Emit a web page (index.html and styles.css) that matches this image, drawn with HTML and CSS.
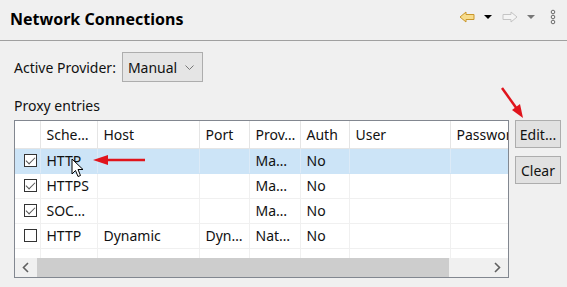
FILE: index.html
```html
<!DOCTYPE html>
<html lang="en">
<head>
    <meta charset="UTF-8">
    <link rel="stylesheet" href="styles.css">
</head>
<body>
<div class="page">
    <header class="titlebar">
        <div class="title">Network Connections</div>
        <div class="nav">
            <svg class="nav-arrow" width="16" height="12" viewBox="0 0 16 12">
                <path d="M1 6 L7 1 L7 3.5 L15 3.5 L15 8.5 L7 8.5 L7 11 Z" fill="#f7dc8c" stroke="#c9972c" stroke-width="1" stroke-linejoin="round"/>
            </svg>
            <span class="drop"></span>
            <svg class="nav-arrow" width="16" height="12" viewBox="0 0 16 12">
                <path d="M15 6 L9 1 L9 3.5 L1 3.5 L1 8.5 L9 8.5 L9 11 Z" fill="#f4f4f4" stroke="#c4c4c4" stroke-width="1" stroke-linejoin="round"/>
            </svg>
            <span class="drop gray"></span>
            <svg class="dots" width="6" height="16" viewBox="0 0 6 16">
                <circle cx="3" cy="3" r="1.8" fill="none" stroke="#6a6a6a" stroke-width="1"/>
                <circle cx="3" cy="8" r="1.8" fill="none" stroke="#6a6a6a" stroke-width="1"/>
                <circle cx="3" cy="13" r="1.8" fill="none" stroke="#6a6a6a" stroke-width="1"/>
            </svg>
        </div>
    </header>

    <main class="content">
        <div class="provider">
            <span>Active Provider:</span>
            <div class="combo">
                <span>Manual</span>
                <svg width="9" height="5" viewBox="0 0 9 5">
                    <path d="M0.5 0.5 L4.5 4.5 L8.5 0.5" fill="none" stroke="#777" stroke-width="1"/>
                </svg>
            </div>
        </div>

        <div class="section-label">Proxy entries</div>

        <div class="entries">
            <div class="grid">
                <div class="grid-body">
                    <table class="proxy-table">
                        <colgroup>
                            <col style="width:25px">
                            <col style="width:57px">
                            <col style="width:102px">
                            <col style="width:50px">
                            <col style="width:51px">
                            <col style="width:49px">
                            <col style="width:101px">
                            <col style="width:90px">
                        </colgroup>
                        <thead>
                            <tr>
                                <th></th>
                                <th>Sche…</th>
                                <th>Host</th>
                                <th>Port</th>
                                <th>Prov…</th>
                                <th>Auth</th>
                                <th>User</th>
                                <th>Passwor</th>
                            </tr>
                        </thead>
                        <tbody>
                            <tr class="selected">
                                <td><span class="check on"></span></td>
                                <td>HTTP</td><td></td><td></td><td>Ma…</td><td>No</td><td></td><td></td>
                            </tr>
                            <tr>
                                <td><span class="check on"></span></td>
                                <td>HTTPS</td><td></td><td></td><td>Ma…</td><td>No</td><td></td><td></td>
                            </tr>
                            <tr>
                                <td><span class="check on"></span></td>
                                <td>SOC…</td><td></td><td></td><td>Ma…</td><td>No</td><td></td><td></td>
                            </tr>
                            <tr>
                                <td><span class="check"></span></td>
                                <td>HTTP</td><td>Dynamic</td><td>Dyn…</td><td>Nat…</td><td>No</td><td></td><td></td>
                            </tr>
                            <tr class="empty">
                                <td></td><td></td><td></td><td></td><td></td><td></td><td></td><td></td>
                            </tr>
                        </tbody>
                    </table>
                </div>
                <div class="hscroll">
                    <svg class="sb-arrow" width="22" height="19" viewBox="0 0 22 19">
                        <path d="M13 5 L8.5 9.5 L13 14" fill="none" stroke="#606060" stroke-width="1.6"/>
                    </svg>
                    <div class="sb-track"><div class="sb-thumb"></div></div>
                    <svg class="sb-arrow" width="22" height="19" viewBox="0 0 22 19">
                        <path d="M9 5 L13.5 9.5 L9 14" fill="none" stroke="#606060" stroke-width="1.6"/>
                    </svg>
                </div>
            </div>
            <div class="buttons">
                <button class="btn">Edit...</button>
                <button class="btn">Clear</button>
            </div>
        </div>
    </main>

    <!-- annotation arrows drawn over the dialog -->
    <svg class="annotations" width="567" height="287" viewBox="0 0 567 287">
        <line x1="145" y1="160" x2="104" y2="160" stroke="#e0141c" stroke-width="2.5"/>
        <path d="M93 160 L108 155 L108 165 Z" fill="#e0141c"/>
        <line x1="502" y1="88" x2="517" y2="109" stroke="#e0141c" stroke-width="2.5"/>
        <path d="M523 118 L512 110 L520 104 Z" fill="#e0141c"/>
    </svg>

    <svg class="cursor" width="13" height="20" viewBox="0 0 13 20">
        <path d="M1 1 L1 16 L4.5 12.5 L7 18.5 L9.5 17.5 L7 11.5 L12 11.5 Z" fill="#fff" stroke="#000" stroke-width="1" stroke-linejoin="round"/>
    </svg>
</div>
</body>
</html>
```

FILE: styles.css
```css
* {
    box-sizing: border-box;
}
body {
    margin: 0;
    background: #f0f0f0;
    font-family: 'Noto Sans', 'Open Sans', sans-serif;
    font-size: 14px;
    color: #111;
}
.page {
    position: relative;
    width: 567px;
    height: 287px;
    overflow: hidden;
}
.titlebar {
    height: 41px;
    display: flex;
    align-items: center;
    justify-content: space-between;
    padding: 0 10px 2px 10px;
    border-bottom: 1px solid #a0a0a0;
}
.title {
    font-weight: bold;
    font-size: 16px;
    color: #000;
}
.nav {
    display: flex;
    align-items: center;
    margin-top: -4px;
}
.nav-arrow {
    margin-right: 9px;
}
.drop {
    width: 0;
    height: 0;
    border-left: 4px solid transparent;
    border-right: 4px solid transparent;
    border-top: 4px solid #000;
    margin-right: 10px;
}
.drop.gray {
    border-top-color: #777;
    margin-right: 15px;
}
.dots {
    margin-right: 1px;
}
.content {
    padding: 11px 8px 0 14px;
}
.provider {
    display: flex;
    align-items: center;
    gap: 6px;
    height: 30px;
}
.combo {
    width: 81px;
    height: 30px;
    display: flex;
    align-items: center;
    justify-content: space-between;
    padding: 0 8px 0 5px;
    background: #e5e5e5;
    border: 1px solid #adadad;
}
.section-label {
    margin-top: 14px;
    height: 22px;
}
.entries {
    display: flex;
    gap: 6px;
    margin-top: 2px;
}
.grid {
    width: 495px;
    height: 158px;
    border: 1px solid #828790;
    background: #fff;
    display: flex;
    flex-direction: column;
}
.grid-body {
    flex: 1;
    overflow: hidden;
}
.proxy-table {
    table-layout: fixed;
    width: 525px;
    border-collapse: collapse;
}
.proxy-table th,
.proxy-table td {
    text-align: left;
    font-weight: normal;
    padding: 0 0 0 6px;
    white-space: nowrap;
    overflow: hidden;
    border-right: 1px solid #f0f0f0;
    border-bottom: 1px solid #f0f0f0;
}
.proxy-table th {
    height: 27px;
    border-bottom: 1px solid #e5e5e5;
    border-right: 1px solid #e5e5e5;
}
.proxy-table td {
    height: 25px;
}
.proxy-table td:first-child,
.proxy-table th:first-child {
    padding-left: 9px;
}
.proxy-table tr.selected td {
    background: #cce4f7;
    border-right-color: #dceaf7;
    border-bottom-color: #cce4f7;
}
.check {
    display: block;
    width: 13px;
    height: 13px;
    border: 1px solid #333;
    background: #fff;
    position: relative;
}
.check.on:after {
    content: '';
    position: absolute;
    left: 3px;
    top: 0px;
    width: 4px;
    height: 8px;
    border-right: 1px solid #555;
    border-bottom: 1px solid #555;
    transform: rotate(45deg);
}
.hscroll {
    height: 19px;
    display: flex;
    background: #f0f0f0;
}
.sb-track {
    flex: 1;
    padding-right: 37px;
}
.sb-thumb {
    height: 100%;
    background: #cdcdcd;
}
.buttons {
    display: flex;
    flex-direction: column;
    gap: 8px;
}
.btn {
    width: 46px;
    height: 28px;
    padding: 0;
    font-family: 'Noto Sans', 'Open Sans', sans-serif;
    font-size: 14px;
    color: #111;
    background: #e1e1e1;
    border: 1px solid #adadad;
    border-radius: 0;
}
.annotations {
    position: absolute;
    left: 0;
    top: 0;
    pointer-events: none;
}
.cursor {
    position: absolute;
    left: 71px;
    top: 158px;
}
```
